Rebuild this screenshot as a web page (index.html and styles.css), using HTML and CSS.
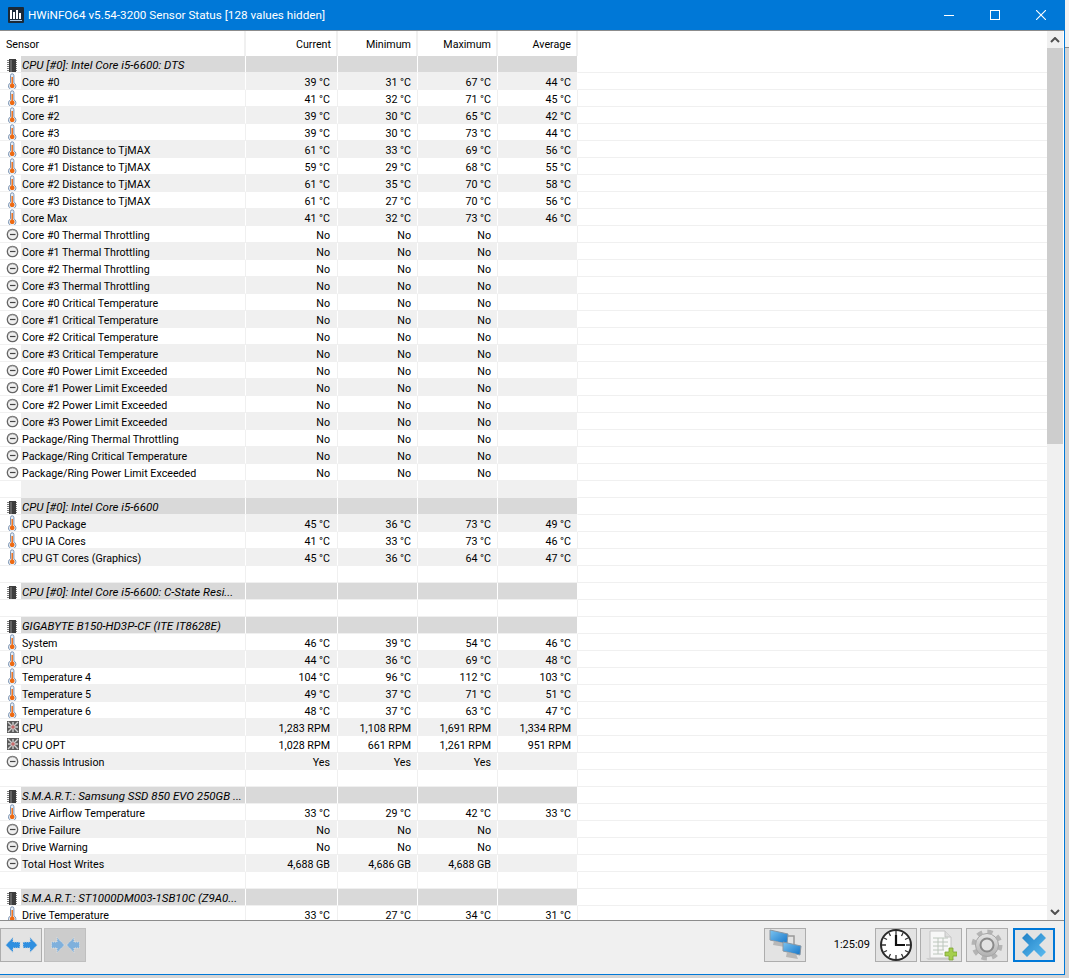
FILE: index.html
```html
<!DOCTYPE html>
<html lang="en">
<head>
  <meta charset="UTF-8" />
  <title>HWiNFO64 v5.54-3200 Sensor Status [128 values hidden]</title>
  <link rel="stylesheet" href="styles.css">
</head>
<body>
  <!-- Icons used by the sensor rows -->
  <svg class="defs" width="0" height="0">
    <symbol id="chip" viewBox="0 0 14 16">
      <path d="M2 3.500h10M2 5.500h10M2 7.500h10M2 9.500h10M2 11.500h10M2 13.500h10" stroke="#808080" stroke-width="1"/>
      <rect x="4" y="2" width="7" height="14" fill="#3d3d3d"/>
      <rect x="5" y="3" width="2" height="12" fill="#666"/>
    </symbol>
    <symbol id="therm" viewBox="0 0 14 16">
      <path d="M5.500 2.500a1.700 1.700 0 0 1 3.400 0v7.300a3.700 3.700 0 1 1-3.400 0z" fill="#e6edf5" stroke="#7b93b3" stroke-width="1"/>
      <path d="M6.500 4h1.400v6.600a2.300 2.300 0 1 1-1.400 0z" fill="#ee6a12"/>
    </symbol>
    <symbol id="gauge" viewBox="0 0 14 16">
      <circle cx="7.500" cy="8.500" r="5.200" fill="#efefef" stroke="#666" stroke-width="1.300"/>
      <path d="M3 6.700A5 5 0 0 1 12 6.700" fill="none" stroke="#a5a5a5" stroke-width="1"/>
      <path d="M5 8.500h5.500" stroke="#444" stroke-width="1.200"/>
    </symbol>
    <symbol id="fan" viewBox="0 0 14 16">
      <rect x="2" y="2" width="12" height="12" fill="#5a5a5a"/>
      <path d="M3 3l10 10M13 3L3 13M8 3v10M3 8h10" stroke="#d0d0d0" stroke-width="1.400"/>
      <circle cx="8" cy="8" r="1.800" fill="#c56a6a"/>
    </symbol>
  </svg>

  <div class="window">
    <div class="titlebar">
      <svg class="app-icon" width="16" height="16" viewBox="0 0 16 16">
        <rect width="16" height="16" rx="1" fill="#1b2a38"/>
        <path d="M3 3v9M6 5v7M9 3v9M12 6v6" stroke="#fff" stroke-width="2"/>
        <path d="M2 13.500h12" stroke="#9fc4e6" stroke-width="1"/>
      </svg>
      <span class="title">HWiNFO64 v5.54-3200 Sensor Status [128 values hidden]</span>
      <div class="win-controls">
        <span class="win-btn"><svg width="10" height="10" viewBox="0 0 10 10"><path d="M0 5.500h10" stroke="#fff"/></svg></span>
        <span class="win-btn"><svg width="10" height="10" viewBox="0 0 10 10"><rect x=".5" y=".5" width="9" height="9" fill="none" stroke="#fff"/></svg></span>
        <span class="win-btn"><svg width="10" height="10" viewBox="0 0 10 10"><path d="M0 0l10 10M10 0L0 10" stroke="#fff" stroke-width="1.100"/></svg></span>
      </div>
    </div>

    <div class="content">
      <div class="list">
        <table class="sensors">
          <colgroup>
            <col class="c-name"><col class="c-cur"><col class="c-min"><col class="c-max"><col class="c-avg"><col>
          </colgroup>
          <thead>
            <tr><th class="left">Sensor</th><th>Current</th><th>Minimum</th><th>Maximum</th><th>Average</th><th class="rest"></th></tr>
          </thead>
          <tbody>
            <tr class="group"><td><span class="name"><svg class="ico"><use href="#chip"/></svg>CPU [#0]: Intel Core i5-6600: DTS</span></td><td></td><td></td><td></td><td></td><td></td></tr>
            <tr><td><span class="name"><svg class="ico"><use href="#therm"/></svg>Core #0</span></td><td>39 °C</td><td>31 °C</td><td>67 °C</td><td>44 °C</td><td></td></tr>
            <tr><td><span class="name"><svg class="ico"><use href="#therm"/></svg>Core #1</span></td><td>41 °C</td><td>32 °C</td><td>71 °C</td><td>45 °C</td><td></td></tr>
            <tr><td><span class="name"><svg class="ico"><use href="#therm"/></svg>Core #2</span></td><td>39 °C</td><td>30 °C</td><td>65 °C</td><td>42 °C</td><td></td></tr>
            <tr><td><span class="name"><svg class="ico"><use href="#therm"/></svg>Core #3</span></td><td>39 °C</td><td>30 °C</td><td>73 °C</td><td>44 °C</td><td></td></tr>
            <tr><td><span class="name"><svg class="ico"><use href="#therm"/></svg>Core #0 Distance to TjMAX</span></td><td>61 °C</td><td>33 °C</td><td>69 °C</td><td>56 °C</td><td></td></tr>
            <tr><td><span class="name"><svg class="ico"><use href="#therm"/></svg>Core #1 Distance to TjMAX</span></td><td>59 °C</td><td>29 °C</td><td>68 °C</td><td>55 °C</td><td></td></tr>
            <tr><td><span class="name"><svg class="ico"><use href="#therm"/></svg>Core #2 Distance to TjMAX</span></td><td>61 °C</td><td>35 °C</td><td>70 °C</td><td>58 °C</td><td></td></tr>
            <tr><td><span class="name"><svg class="ico"><use href="#therm"/></svg>Core #3 Distance to TjMAX</span></td><td>61 °C</td><td>27 °C</td><td>70 °C</td><td>56 °C</td><td></td></tr>
            <tr><td><span class="name"><svg class="ico"><use href="#therm"/></svg>Core Max</span></td><td>41 °C</td><td>32 °C</td><td>73 °C</td><td>46 °C</td><td></td></tr>
            <tr><td><span class="name"><svg class="ico"><use href="#gauge"/></svg>Core #0 Thermal Throttling</span></td><td>No</td><td>No</td><td>No</td><td></td><td></td></tr>
            <tr><td><span class="name"><svg class="ico"><use href="#gauge"/></svg>Core #1 Thermal Throttling</span></td><td>No</td><td>No</td><td>No</td><td></td><td></td></tr>
            <tr><td><span class="name"><svg class="ico"><use href="#gauge"/></svg>Core #2 Thermal Throttling</span></td><td>No</td><td>No</td><td>No</td><td></td><td></td></tr>
            <tr><td><span class="name"><svg class="ico"><use href="#gauge"/></svg>Core #3 Thermal Throttling</span></td><td>No</td><td>No</td><td>No</td><td></td><td></td></tr>
            <tr><td><span class="name"><svg class="ico"><use href="#gauge"/></svg>Core #0 Critical Temperature</span></td><td>No</td><td>No</td><td>No</td><td></td><td></td></tr>
            <tr><td><span class="name"><svg class="ico"><use href="#gauge"/></svg>Core #1 Critical Temperature</span></td><td>No</td><td>No</td><td>No</td><td></td><td></td></tr>
            <tr><td><span class="name"><svg class="ico"><use href="#gauge"/></svg>Core #2 Critical Temperature</span></td><td>No</td><td>No</td><td>No</td><td></td><td></td></tr>
            <tr><td><span class="name"><svg class="ico"><use href="#gauge"/></svg>Core #3 Critical Temperature</span></td><td>No</td><td>No</td><td>No</td><td></td><td></td></tr>
            <tr><td><span class="name"><svg class="ico"><use href="#gauge"/></svg>Core #0 Power Limit Exceeded</span></td><td>No</td><td>No</td><td>No</td><td></td><td></td></tr>
            <tr><td><span class="name"><svg class="ico"><use href="#gauge"/></svg>Core #1 Power Limit Exceeded</span></td><td>No</td><td>No</td><td>No</td><td></td><td></td></tr>
            <tr><td><span class="name"><svg class="ico"><use href="#gauge"/></svg>Core #2 Power Limit Exceeded</span></td><td>No</td><td>No</td><td>No</td><td></td><td></td></tr>
            <tr><td><span class="name"><svg class="ico"><use href="#gauge"/></svg>Core #3 Power Limit Exceeded</span></td><td>No</td><td>No</td><td>No</td><td></td><td></td></tr>
            <tr><td><span class="name"><svg class="ico"><use href="#gauge"/></svg>Package/Ring Thermal Throttling</span></td><td>No</td><td>No</td><td>No</td><td></td><td></td></tr>
            <tr><td><span class="name"><svg class="ico"><use href="#gauge"/></svg>Package/Ring Critical Temperature</span></td><td>No</td><td>No</td><td>No</td><td></td><td></td></tr>
            <tr><td><span class="name"><svg class="ico"><use href="#gauge"/></svg>Package/Ring Power Limit Exceeded</span></td><td>No</td><td>No</td><td>No</td><td></td><td></td></tr>
            <tr><td></td><td></td><td></td><td></td><td></td><td></td></tr>
            <tr class="group"><td><span class="name"><svg class="ico"><use href="#chip"/></svg>CPU [#0]: Intel Core i5-6600</span></td><td></td><td></td><td></td><td></td><td></td></tr>
            <tr><td><span class="name"><svg class="ico"><use href="#therm"/></svg>CPU Package</span></td><td>45 °C</td><td>36 °C</td><td>73 °C</td><td>49 °C</td><td></td></tr>
            <tr><td><span class="name"><svg class="ico"><use href="#therm"/></svg>CPU IA Cores</span></td><td>41 °C</td><td>33 °C</td><td>73 °C</td><td>46 °C</td><td></td></tr>
            <tr><td><span class="name"><svg class="ico"><use href="#therm"/></svg>CPU GT Cores (Graphics)</span></td><td>45 °C</td><td>36 °C</td><td>64 °C</td><td>47 °C</td><td></td></tr>
            <tr><td></td><td></td><td></td><td></td><td></td><td></td></tr>
            <tr class="group"><td><span class="name"><svg class="ico"><use href="#chip"/></svg>CPU [#0]: Intel Core i5-6600: C-State Resi...</span></td><td></td><td></td><td></td><td></td><td></td></tr>
            <tr><td></td><td></td><td></td><td></td><td></td><td></td></tr>
            <tr class="group"><td><span class="name"><svg class="ico"><use href="#chip"/></svg>GIGABYTE B150-HD3P-CF (ITE IT8628E)</span></td><td></td><td></td><td></td><td></td><td></td></tr>
            <tr><td><span class="name"><svg class="ico"><use href="#therm"/></svg>System</span></td><td>46 °C</td><td>39 °C</td><td>54 °C</td><td>46 °C</td><td></td></tr>
            <tr><td><span class="name"><svg class="ico"><use href="#therm"/></svg>CPU</span></td><td>44 °C</td><td>36 °C</td><td>69 °C</td><td>48 °C</td><td></td></tr>
            <tr><td><span class="name"><svg class="ico"><use href="#therm"/></svg>Temperature 4</span></td><td>104 °C</td><td>96 °C</td><td>112 °C</td><td>103 °C</td><td></td></tr>
            <tr><td><span class="name"><svg class="ico"><use href="#therm"/></svg>Temperature 5</span></td><td>49 °C</td><td>37 °C</td><td>71 °C</td><td>51 °C</td><td></td></tr>
            <tr><td><span class="name"><svg class="ico"><use href="#therm"/></svg>Temperature 6</span></td><td>48 °C</td><td>37 °C</td><td>63 °C</td><td>47 °C</td><td></td></tr>
            <tr><td><span class="name"><svg class="ico"><use href="#fan"/></svg>CPU</span></td><td>1,283 RPM</td><td>1,108 RPM</td><td>1,691 RPM</td><td>1,334 RPM</td><td></td></tr>
            <tr><td><span class="name"><svg class="ico"><use href="#fan"/></svg>CPU OPT</span></td><td>1,028 RPM</td><td>661 RPM</td><td>1,261 RPM</td><td>951 RPM</td><td></td></tr>
            <tr><td><span class="name"><svg class="ico"><use href="#gauge"/></svg>Chassis Intrusion</span></td><td>Yes</td><td>Yes</td><td>Yes</td><td></td><td></td></tr>
            <tr><td></td><td></td><td></td><td></td><td></td><td></td></tr>
            <tr class="group"><td><span class="name"><svg class="ico"><use href="#chip"/></svg>S.M.A.R.T.: Samsung SSD 850 EVO 250GB ...</span></td><td></td><td></td><td></td><td></td><td></td></tr>
            <tr><td><span class="name"><svg class="ico"><use href="#therm"/></svg>Drive Airflow Temperature</span></td><td>33 °C</td><td>29 °C</td><td>42 °C</td><td>33 °C</td><td></td></tr>
            <tr><td><span class="name"><svg class="ico"><use href="#gauge"/></svg>Drive Failure</span></td><td>No</td><td>No</td><td>No</td><td></td><td></td></tr>
            <tr><td><span class="name"><svg class="ico"><use href="#gauge"/></svg>Drive Warning</span></td><td>No</td><td>No</td><td>No</td><td></td><td></td></tr>
            <tr><td><span class="name"><svg class="ico"><use href="#gauge"/></svg>Total Host Writes</span></td><td>4,688 GB</td><td>4,686 GB</td><td>4,688 GB</td><td></td><td></td></tr>
            <tr><td></td><td></td><td></td><td></td><td></td><td></td></tr>
            <tr class="group"><td><span class="name"><svg class="ico"><use href="#chip"/></svg>S.M.A.R.T.: ST1000DM003-1SB10C (Z9A0...</span></td><td></td><td></td><td></td><td></td><td></td></tr>
            <tr><td><span class="name"><svg class="ico"><use href="#therm"/></svg>Drive Temperature</span></td><td>33 °C</td><td>27 °C</td><td>34 °C</td><td>31 °C</td><td></td></tr>
          </tbody>
        </table>
      </div>
      <div class="scrollbar">
        <span class="sb-arrow"><svg width="10" height="6" viewBox="0 0 10 6"><path d="M1 5l4-4 4 4" fill="none" stroke="#505050" stroke-width="2"/></svg></span>
        <div class="sb-track"><div class="sb-thumb"></div></div>
        <span class="sb-arrow"><svg width="10" height="6" viewBox="0 0 10 6"><path d="M1 1l4 4 4-4" fill="none" stroke="#505050" stroke-width="2"/></svg></span>
      </div>
    </div>

    <div class="footer">
      <button class="tool">
        <svg width="33" height="18" viewBox="0 0 33 18">
          <path d="M.7 9L8 1.500V6h7v6H8v4.500z" fill="#2f8fe0" stroke="#cfd6dc" stroke-dasharray="1 1"/>
          <path d="M32.300 9L25 1.500V6h-7v6h7v4.500z" fill="#2f8fe0" stroke="#cfd6dc" stroke-dasharray="1 1"/>
        </svg>
      </button>
      <button class="tool off">
        <svg width="29" height="18" viewBox="0 0 29 18">
          <path d="M13.500 9L6 1.500V6H.5v6H6v4.500z" fill="#7fb0dc" stroke="#dfe4e8" stroke-dasharray="1 1"/>
          <path d="M15.500 9L23 1.500V6h5.500v6H23v4.500z" fill="#7fb0dc" stroke="#dfe4e8" stroke-dasharray="1 1"/>
        </svg>
      </button>
      <div class="spacer"></div>
      <button class="tool">
        <svg width="36" height="32" viewBox="0 0 36 32">
          <path d="M14 7h13v9" fill="none" stroke="#9a9a9a" stroke-width="1.500"/>
          <path d="M3 1l18 4-1 10-17-4z" fill="url(#screen)" stroke="#8a97a3"/>
          <path d="M7 12l9 2 2 4-12-2z" fill="#b8b8b8"/>
          <path d="M16 13l18 4-1 9-17-4z" fill="url(#screen)" stroke="#8a97a3"/>
          <path d="M20 23l9 2 2 5-12-2z" fill="#b8b8b8"/>
          <defs>
            <linearGradient id="screen" x1="0" y1="0" x2="1" y2="1">
              <stop offset="0" stop-color="#7cc4f0"/>
              <stop offset="1" stop-color="#1474c8"/>
            </linearGradient>
          </defs>
        </svg>
      </button>
      <span class="clock-time">1:25:09</span>
      <button class="tool">
        <svg width="32" height="32" viewBox="0 0 32 32">
          <circle cx="16" cy="16" r="15" fill="#fff" stroke="#2a2a2a" stroke-width="2"/>
          <path d="M16 2v4M16 26v4M2 16h4M26 16h4M9 4l1.500 3M23 4l-1.500 3M4 9l3 1.500M28 9l-3 1.500M4 23l3-1.500M28 23l-3-1.500M9 28l1.500-3M23 28l-1.500-3" stroke="#333" stroke-width="1.300"/>
          <path d="M16 6v10h9" fill="none" stroke="#111" stroke-width="2.200"/>
        </svg>
      </button>
      <button class="tool gap-s">
        <svg width="32" height="32" viewBox="0 0 32 32">
          <path d="M1 29h26l3 2H3z" fill="#cfcfcf"/>
          <path d="M5 2h15l6 6v21H5z" fill="#f7f7f7" stroke="#c4c4c4"/>
          <path d="M20 2v6h6" fill="#ddd" stroke="#c4c4c4"/>
          <path d="M8 9h15M8 13h15M8 17h15M8 21h11M8 25h10M13 9v16M18 9v12" stroke="#bcc6bc" stroke-width="1"/>
          <path d="M24 19h4v4h4v4h-4v4h-4v-4h-4v-4h4z" fill="#a5cf4e" stroke="#7ea336" stroke-width=".8"/>
        </svg>
      </button>
      <button class="tool gap-m">
        <svg width="32" height="32" viewBox="0 0 32 32">
          <circle cx="16" cy="16" r="13" fill="none" stroke="#b4b4b4" stroke-width="5" stroke-dasharray="5.200 5"/>
          <circle cx="16" cy="16" r="11.500" fill="url(#steel)" stroke="#a5a5a5"/>
          <circle cx="16" cy="16" r="6.500" fill="#e3e3e3" stroke="#8a8a8a" stroke-width="2"/>
          <defs>
            <linearGradient id="steel" x1="0" y1="0" x2="0" y2="1">
              <stop offset="0" stop-color="#e6e6e6"/>
              <stop offset="1" stop-color="#b0b0b0"/>
            </linearGradient>
          </defs>
        </svg>
      </button>
      <button class="tool active">
        <svg width="26" height="26" viewBox="0 0 26 26">
          <path d="M6 1l7 7 7-7 5 5-7 7 7 7-5 5-7-7-7 7-5-5 7-7-7-7z" fill="url(#close-fill)"/>
          <defs>
            <linearGradient id="close-fill" x1="0" y1="0" x2="1" y2="1">
              <stop offset="0" stop-color="#1f80c6"/>
              <stop offset="1" stop-color="#5cbcf0"/>
            </linearGradient>
          </defs>
        </svg>
      </button>
    </div>
  </div>
</body>
</html>
```

FILE: styles.css
```css
html, body {
  margin: 0;
  height: 100%;
  overflow: hidden;
  background: linear-gradient(#f2f2f2 47px, #8a8a8a 47px, #8a8a8a 48px, #d4d4d4 48px);
}
body {
  font-family: Roboto, "Open Sans", sans-serif;
  font-size: 10.700px;
  color: #000;
}
.defs {
  position: absolute;
}
.window {
  width: 1065px;
  height: 975px;
  display: flex;
  flex-direction: column;
  background: #f0f0f0;
  border-bottom: 1px solid #0078d7;
  border-right: 1px solid #0078d7;
  box-sizing: border-box;
}
/* Title bar */
.titlebar {
  height: 30px;
  flex: none;
  background: #0078d7;
  color: white;
  display: flex;
  align-items: center;
  padding-left: 8px;
  font-size: 11.700px;
}
.app-icon {
  margin-right: 4px;
}
.win-controls {
  margin-left: auto;
  display: flex;
}
.win-btn {
  width: 46px;
  height: 30px;
  display: flex;
  align-items: center;
  justify-content: center;
}
/* Sensor list */
.content {
  height: 891px;
  flex: none;
  display: flex;
  background: white;
  border-top: 1px solid #8c8c8c;
  border-bottom: 1px solid #8c8c8c;
  box-sizing: border-box;
}
.list {
  flex: 1;
  overflow: hidden;
}
.sensors {
  width: 100%;
  table-layout: fixed;
  border-collapse: separate;
  border-spacing: 0;
}
.c-name { width: 246px; }
.c-cur { width: 92px; }
.c-min { width: 80px; }
.c-max { width: 80px; }
.c-avg { width: 80px; }
th {
  height: 25px;
  padding: 2px 5px 0 0;
  font-weight: normal;
  text-align: right;
  border-right: 2px solid #f0f0f0;
  box-sizing: border-box;
}
th.left {
  padding-left: 6px;
  text-align: left;
}
th.rest {
  border-right: none;
}
td {
  height: 17px;
  padding: 3px 6px 0 0;
  text-align: right;
  white-space: nowrap;
  overflow: hidden;
  border-bottom: 1px solid #f0f0f0;
  border-right: 1px solid #f0f0f0;
  box-sizing: border-box;
  line-height: 13px;
}
td:first-child {
  padding: 3px 0 0 21px;
  text-align: left;
}
td:nth-child(2) {
  padding-right: 7px;
}
td:last-child {
  border-right: none;
}
tbody tr:nth-child(even) td:not(:last-child) {
  background-color: #f0f0f0;
  border-right-color: white;
}
tbody tr.group td:not(:last-child) {
  background-color: #d9d9d9;
  border-right-color: white;
}
tbody tr.group td:first-child {
  padding-top: 2px;
}
/* the icon sits on white, left of the shaded part of the row */
tbody tr td:first-child {
  background-image: linear-gradient(white, white);
  background-size: 21px 100%;
  background-repeat: no-repeat;
}
.name {
  display: flex;
  align-items: center;
  height: 13px;
  padding-left: 1px;
}
.ico {
  width: 14px;
  height: 16px;
  flex: none;
  margin: -3px 3px 0 -17px;
}
.group .ico {
  margin-top: -1px;
}
.group .name {
  font-style: italic;
  font-size: 11.500px;
}
/* Scrollbar */
.scrollbar {
  width: 16px;
  flex: none;
  display: flex;
  flex-direction: column;
  background: #f0f0f0;
  margin-right: 1px;
}
.sb-arrow {
  height: 17px;
  flex: none;
  display: flex;
  align-items: center;
  justify-content: center;
}
.sb-track {
  flex: 1;
}
.sb-thumb {
  height: 396px;
  background: #cdcdcd;
}
/* Bottom toolbar */
.footer {
  flex: 1;
  display: flex;
  align-items: flex-start;
  gap: 2px;
  padding: 7px 9px 0 0;
}
.spacer {
  flex: 1;
}
.tool {
  width: 42px;
  height: 34px;
  flex: none;
  padding: 0;
  display: flex;
  align-items: center;
  justify-content: center;
  background: #e3e3e3;
  border: 1px solid #adadad;
  box-sizing: border-box;
}
.tool.off {
  background: #cccccc;
  border-color: #bfbfbf;
}
.tool.gap-s {
  margin-left: 1px;
}
.tool.gap-m {
  margin-left: 2px;
}
.tool.active {
  border: 2px solid #0078d7;
  margin-left: 3px;
}
.clock-time {
  width: 65px;
  line-height: 34px;
  text-align: right;
  padding-right: 3px;
  box-sizing: border-box;
  font-size: 11px;
}
```
